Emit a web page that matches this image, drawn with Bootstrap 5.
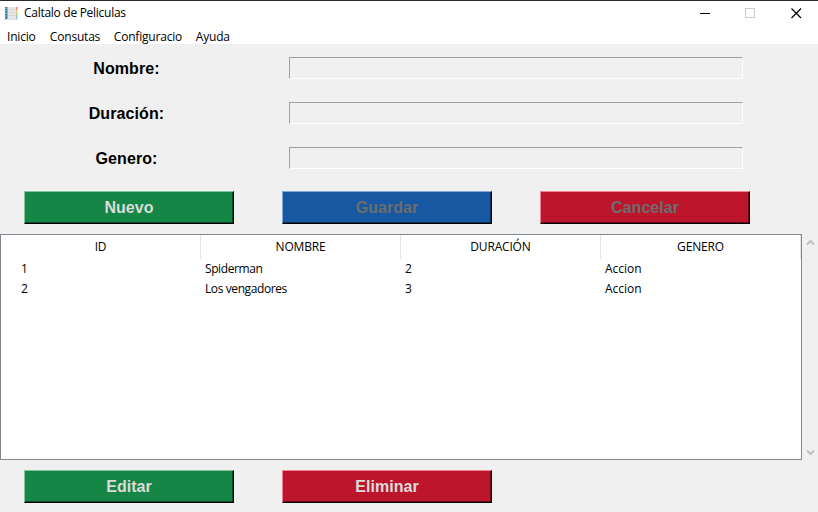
<!DOCTYPE html>
<html lang="es">
<head>
<meta charset="utf-8">
<meta name="viewport" content="width=device-width, initial-scale=1">
<title>Caltalo de Peliculas</title>
<link href="https://cdn.jsdelivr.net/npm/bootstrap@5.3.0/dist/css/bootstrap.min.css" rel="stylesheet">
<style>
body{height:512px;background:#f0f0f0;color:#000;font:12px/20px "Open Sans","Noto Sans",sans-serif;letter-spacing:-.18px}
.titlebar{height:28px;border-top:1px solid #2b2829;padding-left:3px}
.titlebar .caption{margin-left:5px;line-height:24px;letter-spacing:-.28px}
.winbtn{width:45.5px;height:24px;flex:none}
.menubar{height:16px}
.menubar a{color:#000;line-height:17px;text-decoration:none;padding:0 7px;letter-spacing:-.2px}
.menubar a+a{padding-left:7.300px}
.menubar a:nth-child(n+3){margin-left:-.6px}
.form-row{height:45px;padding-top:13px}
.form-row label{width:252px;padding-left:1px;text-align:center;font:bold 16px/24px "Liberation Sans",Arial,sans-serif;letter-spacing:.1px}
.form-row .entry{width:454px;height:22px;margin-left:37px;padding:0;background:#f0f0f0;border:1px solid;border-color:#a0a0a0 #fff #fff #a0a0a0;border-radius:0}
.actions{gap:48px;padding:10px 0 0 24px}
.form-actions{padding-top:12px;padding-bottom:10px}
.tkbtn{width:210px;height:33px;padding:0;border:1px solid;border-radius:0;font:bold 16px/31px "Liberation Sans",Arial,sans-serif;letter-spacing:.05px;color:#dcdcdc;opacity:1!important}
.tkbtn:disabled{color:#6d6d6d}
.green,.green:disabled{background:#158645;border-color:#86c2a0 #000 #000 #86c2a0;box-shadow:inset -1px -1px #0b4823}
.blue,.blue:disabled{background:#1658a2;border-color:#86a8d8 #000 #000 #86a8d8;box-shadow:inset -1px -1px #0b2c55}
.red,.red:disabled{background:#bd152c;border-color:#f08496 #000 #000 #f08496;box-shadow:inset -1px -1px #650b18}
.tree{width:802px;height:226px;background:#fff;border:1px solid #828790}
.tree table{table-layout:fixed;width:800px;border-collapse:separate;border-spacing:0}
.tree th{height:24px;font-weight:400;text-align:center;padding:0;border-right:1px solid #e5e5e5;line-height:22px}
.tree td{height:20px;padding:0 0 0 4px;line-height:20px}
.tree td:nth-child(2){letter-spacing:-.4px}
.tree td:last-child{letter-spacing:0}
.tree td:first-child{padding-left:20px}
.scroller{width:16px;height:226px;padding:4px 0 3px}
</style>
<script src="https://cdn.jsdelivr.net/npm/bootstrap@5.3.0/dist/js/bootstrap.bundle.min.js"></script>
</head>
<body class="overflow-hidden">
<header class="bg-white">
  <div class="titlebar d-flex">
    <svg width="16" height="24" viewBox="0 0 16 24">
      <path d="M3 6h10.500v12.500H3z" fill="#e6e6e6"/>
      <path d="M5.500 8.500h6.500M5.500 11.500h6.500M5.500 14.500h6.500" stroke="#d8d8d8"/>
      <path d="M2 6h2.500v12H2z" fill="#3f7f9c"/>
      <path d="M1.500 7.500h2M1.500 10h2M1.500 12.500h2M1.500 15h2" stroke="#86cdec"/>
      <path d="M13 6h1.500v3H13z" fill="#f08f6c"/><path d="M13 9h1.500v3H13z" fill="#ecd06a"/><path d="M13 12h1.500v3H13z" fill="#a3d68f"/><path d="M13 15h1.500v3H13z" fill="#8cc8e8"/>
      <path d="M1 18.500h14" stroke="#e0e0e0"/>
    </svg>
    <span class="caption me-auto">Caltalo de Peliculas</span>
    <svg class="winbtn" viewBox="0 0 45.500 24" shape-rendering="crispEdges"><path d="M18 12.500h10" stroke="#000"/></svg>
    <svg class="winbtn" viewBox="0 0 45.500 24" shape-rendering="crispEdges"><path d="M18 7.500h9v9h-9z" fill="none" stroke="#ccc"/></svg>
    <svg class="winbtn" viewBox="0 0 45.500 24"><path d="M18.500 7.500l9.500 9.500M28 7.500l-9.500 9.500" stroke="#000" stroke-width="1.200"/></svg>
  </div>
  <nav class="menubar d-flex">
    <a href="#">Inicio</a><a href="#">Consutas</a><a href="#">Configuracio</a><a href="#">Ayuda</a>
  </nav>
</header>
<main>
  <form class="m-0">
    <div class="form-row d-flex"><label for="nombre">Nombre:</label><input id="nombre" class="entry" disabled></div>
    <div class="form-row d-flex"><label for="duracion">Duración:</label><input id="duracion" class="entry" disabled></div>
    <div class="form-row d-flex"><label for="genero">Genero:</label><input id="genero" class="entry" disabled></div>
    <div class="actions form-actions d-flex">
      <button type="button" class="btn tkbtn green">Nuevo</button>
      <button type="button" class="btn tkbtn blue" disabled>Guardar</button>
      <button type="button" class="btn tkbtn red" disabled>Cancelar</button>
    </div>
  </form>
  <div class="d-flex">
    <div class="tree">
      <table>
        <thead><tr><th>ID</th><th>NOMBRE</th><th>DURACIÓN</th><th>GENERO</th></tr></thead>
        <tbody>
          <tr><td>1</td><td>Spiderman</td><td>2</td><td>Accion</td></tr>
          <tr><td>2</td><td>Los vengadores</td><td>3</td><td>Accion</td></tr>
        </tbody>
      </table>
    </div>
    <div class="scroller d-flex flex-column justify-content-between align-items-center">
      <svg width="9" height="9" viewBox="0 0 9 9"><path d="M1 6.500l3.500-3.500 3.500 3.500" fill="none" stroke="#bfbfbf" stroke-width="2"/></svg>
      <svg width="9" height="9" viewBox="0 0 9 9"><path d="M1 2.500l3.500 3.500 3.500-3.500" fill="none" stroke="#bfbfbf" stroke-width="2"/></svg>
    </div>
  </div>
  <div class="actions d-flex">
    <button type="button" class="btn tkbtn green">Editar</button>
    <button type="button" class="btn tkbtn red">Eliminar</button>
  </div>
</main>
</body>
</html>
